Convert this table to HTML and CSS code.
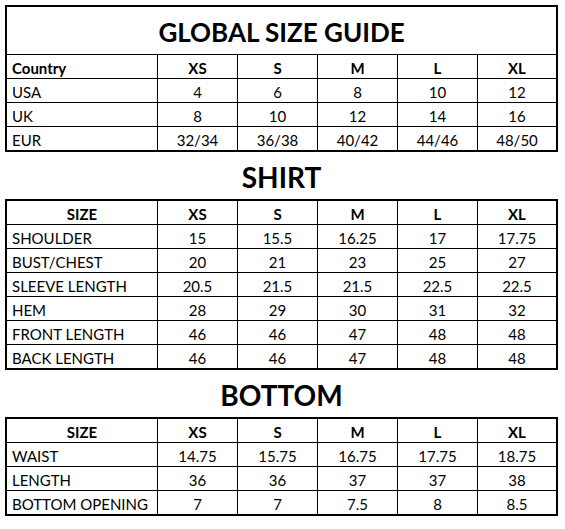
FILE: index.html
```html
<!DOCTYPE html>
<html>
<head>
<meta charset="utf-8">
<link rel="stylesheet" href="styles.css">
</head>
<body>
<div class="page">
  <div class="grid with-title">
    <div class="title">GLOBAL SIZE GUIDE</div>
    <div class="c first bold">Country</div><div class="c bold">XS</div><div class="c bold">S</div><div class="c bold">M</div><div class="c bold">L</div><div class="c bold">XL</div>
    <div class="c first">USA</div><div class="c">4</div><div class="c">6</div><div class="c">8</div><div class="c">10</div><div class="c">12</div>
    <div class="c first">UK</div><div class="c">8</div><div class="c">10</div><div class="c">12</div><div class="c">14</div><div class="c">16</div>
    <div class="c first">EUR</div><div class="c">32/34</div><div class="c">36/38</div><div class="c">40/42</div><div class="c">44/46</div><div class="c">48/50</div>
  </div>

  <div class="heading">SHIRT</div>
  <div class="grid">
    <div class="c bold">SIZE</div><div class="c bold">XS</div><div class="c bold">S</div><div class="c bold">M</div><div class="c bold">L</div><div class="c bold">XL</div>
    <div class="c first">SHOULDER</div><div class="c">15</div><div class="c">15.5</div><div class="c">16.25</div><div class="c">17</div><div class="c">17.75</div>
    <div class="c first">BUST/CHEST</div><div class="c">20</div><div class="c">21</div><div class="c">23</div><div class="c">25</div><div class="c">27</div>
    <div class="c first">SLEEVE LENGTH</div><div class="c">20.5</div><div class="c">21.5</div><div class="c">21.5</div><div class="c">22.5</div><div class="c">22.5</div>
    <div class="c first">HEM</div><div class="c">28</div><div class="c">29</div><div class="c">30</div><div class="c">31</div><div class="c">32</div>
    <div class="c first">FRONT LENGTH</div><div class="c">46</div><div class="c">46</div><div class="c">47</div><div class="c">48</div><div class="c">48</div>
    <div class="c first">BACK LENGTH</div><div class="c">46</div><div class="c">46</div><div class="c">47</div><div class="c">48</div><div class="c">48</div>
  </div>

  <div class="heading">BOTTOM</div>
  <div class="grid">
    <div class="c bold">SIZE</div><div class="c bold">XS</div><div class="c bold">S</div><div class="c bold">M</div><div class="c bold">L</div><div class="c bold">XL</div>
    <div class="c first">WAIST</div><div class="c">14.75</div><div class="c">15.75</div><div class="c">16.75</div><div class="c">17.75</div><div class="c">18.75</div>
    <div class="c first">LENGTH</div><div class="c">36</div><div class="c">36</div><div class="c">37</div><div class="c">37</div><div class="c">38</div>
    <div class="c first">BOTTOM OPENING</div><div class="c">7</div><div class="c">7</div><div class="c">7.5</div><div class="c">8</div><div class="c">8.5</div>
  </div>
</div>
</body>
</html>
```

FILE: styles.css
```css
html, body {
  margin: 0;
  padding: 0;
  background: #ffffff;
}
body {
  font-family: Lato, "Liberation Sans", sans-serif;
  color: #000000;
}
.page {
  padding: 5px 0 0 5px;
  width: 553px;
}
.grid {
  display: grid;
  grid-template-columns: 150px 79px 79px 79px 79px 78px;
  grid-auto-rows: 23px;
  gap: 1px;
  background: #000000;
  border: 2px solid #000000;
}
.grid.with-title {
  grid-template-rows: 47px;
}
.title {
  grid-column: 1 / -1;
  background: #ffffff;
  display: flex;
  align-items: center;
  justify-content: center;
  font-weight: 700;
  font-size: 26px;
  padding-top: 3px;
  box-sizing: border-box;
}
.c {
  background: #ffffff;
  display: flex;
  align-items: center;
  justify-content: center;
  font-size: 15px;
  padding-top: 2px;
  box-sizing: border-box;
  white-space: nowrap;
}
.c.first {
  justify-content: flex-start;
  padding-left: 5px;
}
.bold {
  font-weight: 700;
}
.heading {
  height: 47px;
  display: flex;
  align-items: center;
  justify-content: center;
  font-weight: 700;
  font-size: 28px;
  padding-top: 3px;
  box-sizing: border-box;
}
```
